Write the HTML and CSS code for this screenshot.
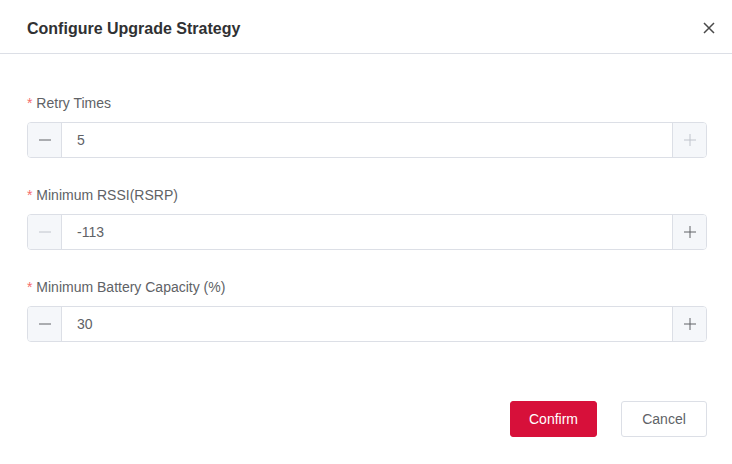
FILE: index.html
```html
<!DOCTYPE html>
<html>
<head>
<meta charset="utf-8">
<link rel="stylesheet" href="styles.css">
</head>
<body>
<div class="dialog">
  <div class="header">
    <span class="title">Configure Upgrade Strategy</span>
    <button class="close" aria-label="Close">
      <svg width="12" height="12" viewBox="0 0 12 12"><path d="M1 1L11 11M11 1L1 11" stroke="#4a4a4a" stroke-width="1.5" fill="none"/></svg>
    </button>
  </div>
  <div class="body">
    <div class="field">
      <label class="label"><span class="req">*</span> Retry Times</label>
      <div class="num">
        <span class="step minus"><svg width="14" height="14" viewBox="0 0 14 14"><path d="M1 7H13" stroke="currentColor" stroke-width="1"/></svg></span>
        <span class="value">5</span>
        <span class="step plus disabled"><svg width="14" height="14" viewBox="0 0 14 14"><path d="M1 7H13M7 1V13" stroke="currentColor" stroke-width="1"/></svg></span>
      </div>
    </div>
    <div class="field">
      <label class="label"><span class="req">*</span> Minimum RSSI(RSRP)</label>
      <div class="num">
        <span class="step minus disabled"><svg width="14" height="14" viewBox="0 0 14 14"><path d="M1 7H13" stroke="currentColor" stroke-width="1"/></svg></span>
        <span class="value">-113</span>
        <span class="step plus"><svg width="14" height="14" viewBox="0 0 14 14"><path d="M1 7H13M7 1V13" stroke="currentColor" stroke-width="1"/></svg></span>
      </div>
    </div>
    <div class="field">
      <label class="label"><span class="req">*</span> Minimum Battery Capacity (%)</label>
      <div class="num">
        <span class="step minus"><svg width="14" height="14" viewBox="0 0 14 14"><path d="M1 7H13" stroke="currentColor" stroke-width="1"/></svg></span>
        <span class="value">30</span>
        <span class="step plus"><svg width="14" height="14" viewBox="0 0 14 14"><path d="M1 7H13M7 1V13" stroke="currentColor" stroke-width="1"/></svg></span>
      </div>
    </div>
  </div>
  <div class="footer">
    <button class="btn primary">Confirm</button>
    <button class="btn">Cancel</button>
  </div>
</div>
</body>
</html>
```
FILE: styles.css
```css
* { box-sizing: border-box; }
html, body { margin: 0; padding: 0; background: #fff; }
body { font-family: "Liberation Sans", Arial, sans-serif; color: #606266; }
.dialog { width: 732px; height: 464px; background: #fff; }
.header {
  height: 54px;
  border-bottom: 1px solid #dcdfe6;
  display: flex;
  align-items: center;
  justify-content: space-between;
  padding: 0 15px 0 27px;
}
.title { font-size: 16px; font-weight: bold; color: #303133; margin-top: 4px; }
.close { border: 0; background: none; padding: 0; width: 16px; height: 16px; display: flex; align-items: center; justify-content: center; margin-top: 2px; cursor: pointer; }
.body { padding: 39px 25px 0 27px; }
.field { margin-bottom: 27px; }
.label { display: block; height: 20px; line-height: 20px; font-size: 14px; color: #606266; margin-bottom: 9px; }
.req { color: #f56c6c; }
.num {
  display: flex;
  height: 36px;
  border: 1px solid #dcdfe6;
  border-radius: 4px;
  overflow: hidden;
}
.step {
  width: 34px;
  background: #f5f7fa;
  display: flex;
  align-items: center;
  justify-content: center;
  color: #606266;
}
.step.disabled { color: #c0c4cc; }
.minus { border-right: 1px solid #dcdfe6; }
.plus { border-left: 1px solid #dcdfe6; }
.value { flex: 1; line-height: 34px; padding-left: 15px; font-size: 14px; color: #606266; }
.footer { display: flex; justify-content: flex-end; gap: 24px; padding: 32px 25px 0 0; }
.btn {
  height: 36px;
  width: 86px;
  padding: 0;
  font-family: "Liberation Sans", Arial, sans-serif;
  font-size: 14px;
  border: 1px solid #dcdfe6;
  border-radius: 3px;
  background: #fff;
  color: #606266;
}
.btn.primary { width: 87px; background: #d7103a; border-color: #d7103a; color: #fff; }
```
